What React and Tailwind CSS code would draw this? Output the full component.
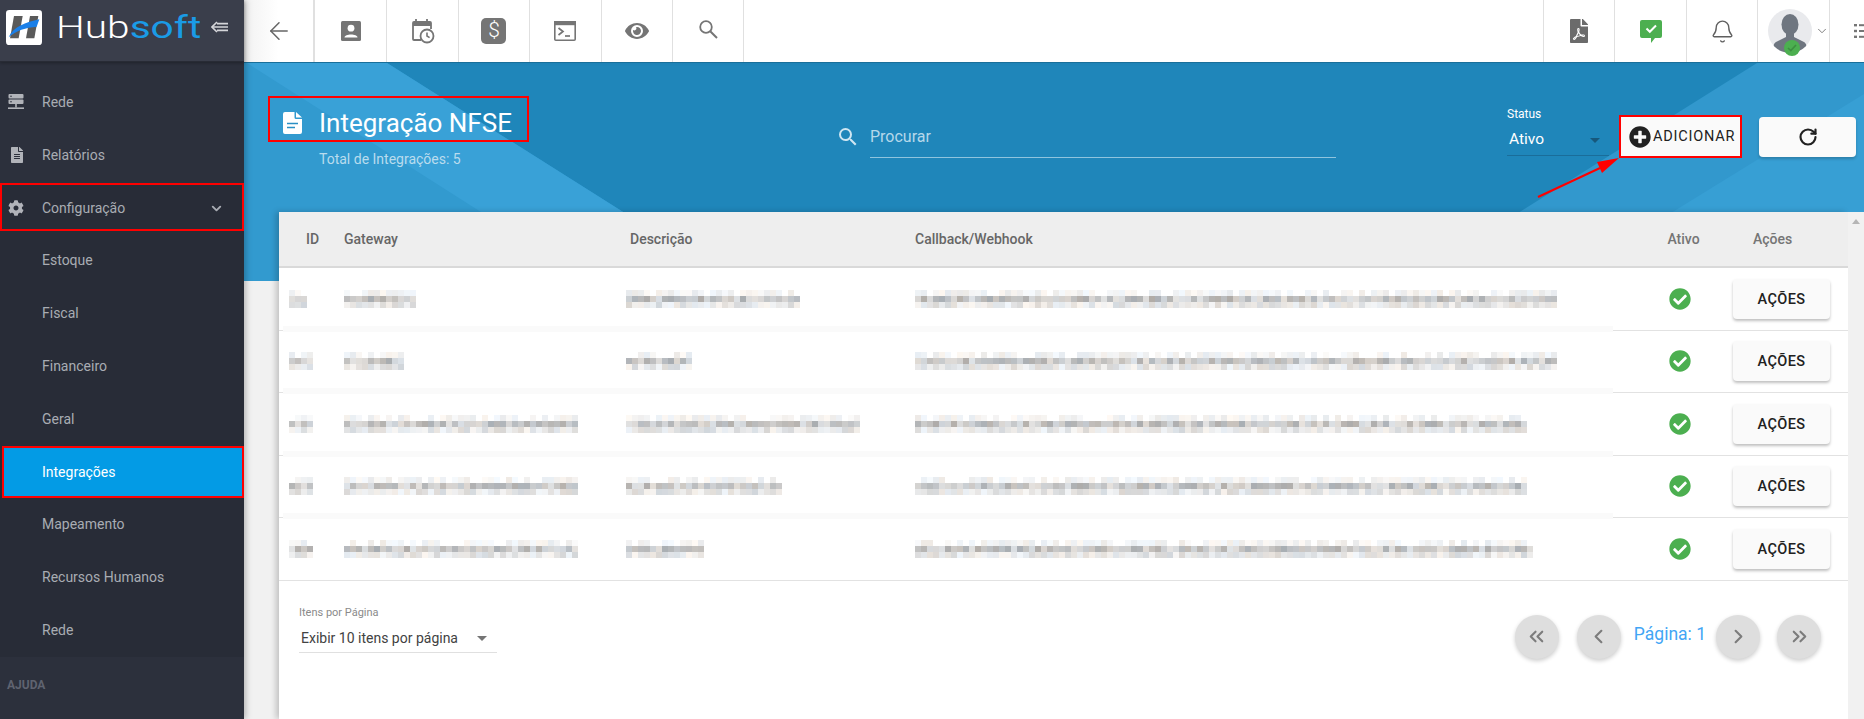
import React from 'react';
import { ArrowLeft, Bell, ChevronDown, RotateCw, ChevronLeft, ChevronRight, ChevronsLeft, ChevronsRight } from 'lucide-react';
import { FaCog, FaFileAlt, FaFilePdf, FaPlusCircle, FaCheckCircle, FaEye } from 'react-icons/fa';
import { MdSearch } from 'react-icons/md';

// Seeded mosaic that stands in for the pixelated data in the screenshot
const Mosaic = ({ width, seed }) => {
  const cols = Math.round(width / 6);
  let s = seed * 9301 + 49297;
  const next = () => {
    s = (s * 9301 + 49297) % 233280;
    return s / 233280;
  };
  const cells = [];
  for (let r = 0; r < 3; r++) {
    for (let c = 0; c < cols; c++) {
      const n = next();
      if (r === 0 && n < 0.25) continue;
      const base = r === 1 ? 172 + n * 55 : r === 0 ? 228 + n * 22 : 214 + n * 32;
      const tint = next() * 12 - 6;
      cells.push(
        <rect key={`${r}-${c}`} x={c * 6} y={r * 6} width="6" height="6"
          fill={`rgb(${base + tint},${base},${base - tint})`} />
      );
    }
  }
  return (
    <svg width={cols * 6} height="18" className="block" shapeRendering="crispEdges">{cells}</svg>
  );
};

const rows = [
  { id: 18, gw: 72, desc: 174, cb: 642 },
  { id: 24, gw: 60, desc: 66, cb: 642 },
  { id: 24, gw: 234, desc: 234, cb: 612 },
  { id: 24, gw: 234, desc: 156, cb: 612 },
  { id: 24, gw: 234, desc: 78, cb: 618 },
];

const subMenu = ['Estoque', 'Fiscal', 'Financeiro', 'Geral', 'Integrações', 'Mapeamento', 'Recursos Humanos', 'Rede'];

const Logo = () => (
  <svg width="36" height="35" viewBox="0 0 108 105" className="shrink-0">
    <rect width="108" height="105" rx="10" fill="#fff" />
    <polygon points="24,18 50,18 38,85 12,85" fill="#5a5a5a" />
    <polygon points="72,18 97,18 85,85 60,85" fill="#5a5a5a" />
    <path d="M8 82 C20 52 60 36 100 28 L92 50 C60 52 30 62 8 82Z" fill="#1a7fe8" />
  </svg>
);

const CollapseIcon = () => (
  <svg width="18" height="12" viewBox="0 0 18 12" fill="none" stroke="#d5d6da" strokeWidth="1.6">
    <path d="M6 1 L1 6 L6 11" />
    <path d="M2 6 H17 M6 2.6 H17 M6 9.4 H17" />
  </svg>
);

const ServerIcon = () => (
  <svg width="16" height="16" viewBox="0 0 16 16">
    <rect x="0.5" width="15" height="4.6" rx="1" fill="#b1b3b9" />
    <rect x="0.5" y="5.4" width="15" height="4.6" rx="1" fill="#b1b3b9" />
    <circle cx="3" cy="2.3" r="0.8" fill="#2c303c" />
    <circle cx="3" cy="7.7" r="0.8" fill="#2c303c" />
    <rect x="7.2" y="10" width="1.6" height="3.5" fill="#b1b3b9" />
    <rect y="13.4" width="16" height="1.6" fill="#b1b3b9" />
  </svg>
);

const DocIcon = () => (
  <svg width="19" height="22" viewBox="0 0 19 22" className="shrink-0">
    <path d="M2 0h9.5v5.5a1.5 1.5 0 0 0 1.5 1.5h6v13a2 2 0 0 1-2 2H2a2 2 0 0 1-2-2V2a2 2 0 0 1 2-2z" fill="#fff" />
    <path d="M13 0l6 5.5h-6z" fill="#fff" />
    <path d="M4 11.5h11M4 15.5h8" stroke="#2a8fc4" strokeWidth="1.5" />
  </svg>
);

const ContactIcon = () => (
  <svg width="20" height="20" viewBox="0 0 20 20">
    <rect width="20" height="20" rx="1.5" fill="#757575" />
    <circle cx="10" cy="7.2" r="3.4" fill="#fff" />
    <path d="M3.5 16.5 C3.5 12.5 16.5 12.5 16.5 16.5Z" fill="#fff" />
  </svg>
);

const CalendarClockIcon = () => (
  <svg width="24" height="26" viewBox="0 0 24 26" fill="none">
    <path d="M5 1v4M16 1v4" stroke="#757575" strokeWidth="1.8" />
    <path d="M10 22H3a1 1 0 0 1-1-1V5a1 1 0 0 1 1-1h16a1 1 0 0 1 1 1v6" stroke="#757575" strokeWidth="1.8" />
    <rect x="2" y="4" width="18" height="4" fill="#757575" />
    <circle cx="16" cy="18" r="6.5" fill="#fff" stroke="#757575" strokeWidth="1.8" />
    <path d="M16 14.5V18l2.6 1.6" stroke="#757575" strokeWidth="1.6" />
  </svg>
);

const TerminalIcon = () => (
  <svg width="22" height="20" viewBox="0 0 22 20" fill="none" stroke="#757575">
    <rect x="0.8" y="0.8" width="20.4" height="18.4" rx="1" strokeWidth="1.6" />
    <rect x="0.8" y="0.8" width="20.4" height="2.6" fill="#757575" strokeWidth="1.6" />
    <path d="M4.5 7 L9 10.5 L4.5 14" strokeWidth="1.7" />
    <path d="M11 15 H16" strokeWidth="1.7" />
  </svg>
);

const SearchIcon = () => (
  <svg width="19" height="19" viewBox="0 0 19 19" fill="none" stroke="#757575" className="-mt-[3px]">
    <circle cx="7" cy="7" r="5.8" strokeWidth="1.8" />
    <path d="M11.2 11.2 L18 18" strokeWidth="2" />
  </svg>
);

const ChatCheckIcon = () => (
  <svg width="22" height="23" viewBox="0 0 22 23">
    <path d="M2 0h18a2 2 0 0 1 2 2v14a2 2 0 0 1-2 2h-5l-4 5v-5H2a2 2 0 0 1-2-2V2a2 2 0 0 1 2-2z" fill="#4caf50" />
    <path d="M6.5 8.5 L9.8 11.8 L16 5.5" fill="none" stroke="#fff" strokeWidth="2" />
  </svg>
);

const ListIcon = () => (
  <svg width="16" height="16" viewBox="0 0 16 16" fill="#757575" className="shrink-0">
    <rect width="3" height="2.4" y="1" />
    <rect width="3" height="2.4" y="6.8" />
    <rect width="3" height="2.4" y="12.6" />
    <rect x="5" width="11" height="2" y="1.2" />
    <rect x="5" width="11" height="2" y="7" />
    <rect x="5" width="11" height="2" y="12.8" />
  </svg>
);

const Avatar = () => (
  <div className="relative w-[44px] h-[44px]">
    <div className="w-full h-full rounded-full overflow-hidden bg-[#e9eaed]">
      <svg width="44" height="44" viewBox="0 0 44 44">
        <ellipse cx="22" cy="15.5" rx="8.5" ry="10.5" fill="#6f7680" />
        <path d="M18 23h8v5l10 5c2 1 3 4 4 11H4c1-7 2-10 4-11l10-5z" fill="#6f7680" />
      </svg>
    </div>
    <div className="absolute left-[16px] top-[31px] w-[16px] h-[16px] rounded-full bg-[#4caf50] flex items-center justify-center">
      <svg width="10" height="8" viewBox="0 0 10 8" fill="none" stroke="#3c8f40" strokeWidth="1.6">
        <path d="M1 4 L3.8 6.6 L9 1" />
      </svg>
    </div>
  </div>
);

const ToolCell = ({ children, className = '' }) => (
  <div className={`w-[71.4px] h-full flex items-center justify-center border-r border-[#e0e0e0] text-[#757575] ${className}`}>
    {children}
  </div>
);

const Sidebar = () => (
  <aside className="w-[244px] shrink-0 h-full flex flex-col bg-[#2c303c] text-[#a9acb3] text-[14px] z-10 shadow-[2px_0_6px_rgba(0,0,0,0.25)]">
    <div className="h-[62px] shrink-0 flex items-center bg-[#3a3e4b] pl-[6px] border-b border-[#282b35] shadow-[0_1px_3px_rgba(0,0,0,0.3)]">
      <div className="-mt-[7px]"><Logo /></div>
      <div className="ml-[14px] w-[146px] -mt-[8px] text-[32px] font-light leading-none whitespace-nowrap origin-left scale-x-[1.27]">
        <span className="text-white">Hub</span><span className="text-[#1a9be6] font-normal">soft</span>
      </div>
      <div className="ml-[9px] -mt-[8px]"><CollapseIcon /></div>
    </div>

    <nav className="pt-[13.5px] flex-1 flex flex-col">
      <div className="h-[53px] shrink-0 flex items-center pl-[8px]">
        <span className="w-[34px]"><ServerIcon /></span>Rede
      </div>
      <div className="h-[53px] shrink-0 flex items-center pl-[9px]">
        <span className="w-[33px]"><FaFileAlt size={16} className="text-[#b1b3b9]" /></span>Relatórios
      </div>
      <div className="h-[48px] mt-[1px] shrink-0 flex items-center pt-[3px] pl-[8px] pr-[20px] bg-[#282c37] outline-2 -outline-offset-2 outline-[#f00]">
        <span className="w-[34px]"><FaCog size={16} className="text-[#b1b3b9]" /></span>Configuração
        <ChevronDown size={15} strokeWidth={3} className="ml-auto" />
      </div>
      <div className="bg-[#282c37] flex flex-col h-[426.5px] shrink-0 pt-[4px]">
        {subMenu.map((item) =>
          item === 'Integrações' ? (
            <div key={item} className="h-[52.8px] shrink-0 flex items-center pl-[40px] ml-[2px] bg-[#039be5] text-white outline-2 -outline-offset-2 outline-[#f00]">
              {item}
            </div>
          ) : (
            <div key={item} className="h-[52.8px] shrink-0 flex items-center pl-[42px]">{item}</div>
          )
        )}
      </div>
      <div className="pl-[7px] pt-[19px] text-[12px] font-bold text-[#5f6370]">AJUDA</div>
    </nav>
  </aside>
);

const Topbar = () => (
  <header className="h-[62px] shrink-0 flex items-stretch bg-white">
    <ToolCell className="w-[70px] border-r-2 bg-gradient-to-r from-[#f2f2f2] via-white to-white">
      <ArrowLeft size={28} strokeWidth={1.3} className="text-[#666666]" />
    </ToolCell>
    <ToolCell className="w-[72px]"><ContactIcon /></ToolCell>
    <ToolCell><CalendarClockIcon /></ToolCell>
    <ToolCell>
      <div className="w-[25px] h-[26px] rounded-[5px] bg-[#757575] text-white text-[21px] font-light flex items-center justify-center">$</div>
    </ToolCell>
    <ToolCell><TerminalIcon /></ToolCell>
    <ToolCell><FaEye size={24} /></ToolCell>
    <ToolCell><SearchIcon /></ToolCell>

    <div className="ml-auto flex items-stretch border-l border-[#e0e0e0]">
      <ToolCell className="w-[71px]"><FaFilePdf size={24} className="text-[#6b6b6b]" /></ToolCell>
      <ToolCell className="w-[72px]"><ChatCheckIcon /></ToolCell>
      <ToolCell className="w-[71px]"><Bell size={25} strokeWidth={1.3} className="text-[#5f5f5f]" /></ToolCell>
      <ToolCell className="w-[72px] justify-start pl-[10px] gap-[3px]">
        <Avatar />
        <ChevronDown size={14} strokeWidth={1.6} />
      </ToolCell>
      <div className="w-[34px] h-full flex items-center pl-[24px] overflow-hidden"><ListIcon /></div>
    </div>
  </header>
);

const Banner = () => (
  <section className="relative h-[219px] shrink-0 overflow-hidden bg-[#1f86ba] border-t border-[#196f9a] shadow-[inset_8px_0_8px_-6px_rgba(0,0,0,0.25)]">
    <svg className="absolute inset-0" width="1620" height="219">
      <polygon points="0,0 143,0 490,219 0,219" fill="#329acf" />
      <polygon points="3,0 143,0 490,219 347,219" fill="#39a1d7" />
      <polygon points="1513,0 1620,0 1620,219 1164,219" fill="#3298cd" />
      <polygon points="1620,31 1620,219 1315,219" fill="#379fd4" />
    </svg>

    <div className="relative flex items-start pl-[24px] text-white">
      <div className="w-[568px] pt-[33px]">
        <div className="w-[261px] h-[46px] flex items-center pl-[15px] pt-[8px] outline-2 -outline-offset-2 outline-[#f00]">
          <DocIcon />
          <h1 className="ml-[17px] text-[26px] leading-none whitespace-nowrap">Integração NFSE</h1>
        </div>
        <p className="mt-[6.5px] ml-[51px] text-[14px] leading-5 text-[#b9dcee]">Total de Integrações: 5</p>
      </div>

      <div className="w-[500px] mt-[55px] flex items-center h-[40px]">
        <span className="w-[34px] shrink-0 pb-[2px]"><MdSearch size={24} className="text-[#cfe6f2]" /></span>
        <div className="flex-1 h-full flex items-center pb-[2px] border-b border-[#8fc4de] text-[16px] text-[#b5d8ea]">Procurar</div>
      </div>

      <div className="ml-[171px] w-[102px] mt-[44px]">
        <div className="text-[12px] leading-[14px]">Status</div>
        <div className="mt-[6px] h-[29px] flex items-center justify-between pl-[2px] pr-[9px] pb-[2px] border-b border-[#1a6d9a] text-[15.5px]">
          Ativo
          <span className="w-0 h-0 border-x-[5px] border-x-transparent border-t-[5px] border-t-[#17587c]" />
        </div>
      </div>

      <button className="ml-[10px] mt-[52px] w-[123px] h-[43px] flex items-center pl-[10px] bg-[#fafafa] text-[#212121] text-[14.5px] tracking-[0.8px] outline-2 -outline-offset-2 outline-[#f00]">
        <FaPlusCircle size={22} className="shrink-0 mr-[2px]" />ADICIONAR
      </button>

      <button className="ml-[17px] mt-[54px] w-[97px] h-[40px] flex items-center justify-center rounded-[4px] bg-[#fafafa] text-[#212121] shadow-[0_2px_3px_rgba(0,0,0,0.2)]">
        <RotateCw size={20} strokeWidth={2.6} />
      </button>
    </div>

    {/* annotation arrow pointing at the add button */}
    <svg className="absolute left-[1290px] top-[91px]" width="90" height="48" fill="none">
      <path d="M4 43 L66 14" stroke="#f00" strokeWidth="2" />
      <polygon points="85,4 63,8 68,19" fill="#f00" />
    </svg>
  </section>
);

const Table = () => (
  <div className="flex-1 bg-white shadow-[-3px_0_6px_rgba(0,0,0,0.2)] flex flex-col">
    <div className="grid grid-cols-[65px_286px_285px_735px_60px_1fr] items-center h-[56px] pt-px bg-[#eeeeee] border-b-2 border-[#d9d9d9] text-[14px] font-medium text-[#666666]">
      <div className="pl-[27px]">ID</div>
      <div>Gateway</div>
      <div>Descrição</div>
      <div>Callback/Webhook</div>
      <div className="text-center pl-[7px] text-[#757575]">Ativo</div>
      <div className="pl-[43px] text-[#757575]">Ações</div>
    </div>

    {rows.map((row, i) => (
      <div key={i} className="relative grid grid-cols-[65px_286px_285px_735px_60px_1fr] items-center h-[62.5px] shrink-0 border-b border-[#e2e2e2]">
        <div className="pl-[10px]"><Mosaic width={row.id} seed={i + 1} /></div>
        <div><Mosaic width={row.gw} seed={i + 11} /></div>
        <div className="-ml-[4px]"><Mosaic width={row.desc} seed={i + 21} /></div>
        <div><Mosaic width={row.cb} seed={i + 31} /></div>
        <div className="flex justify-center"><FaCheckCircle size={22} className="text-[#4caf50]" /></div>
        <div className="pl-[23px]">
          <button className="w-[97px] h-[40px] pt-[2px] rounded-[4px] bg-[#fafafa] text-[14.5px] font-medium tracking-[0.4px] text-[#212121] shadow-[0_2px_3px_rgba(0,0,0,0.25)]">AÇÕES</button>
        </div>
        {i < rows.length - 1 && (
          <div className="absolute left-[4px] -bottom-[2px] w-[1330px] h-[6px] bg-[#fafafa]" />
        )}
      </div>
    ))}

    <div className="flex-1 flex justify-between">
      <div className="pl-[20px] pt-[25px] w-[218px]">
        <div className="text-[11px] leading-[14px] text-[#8a8a8a]">Itens por Página</div>
        <div className="mt-[5px] h-[28px] flex items-center justify-between pl-[2px] pr-[10px] border-b border-[#e0e0e0] text-[14px] text-[#424242]">
          Exibir 10 itens por página
          <span className="w-0 h-0 border-x-[5px] border-x-transparent border-t-[5px] border-t-[#757575]" />
        </div>
      </div>

      <div className="flex items-start pt-[34px] pr-[27px] text-[#7c7c7c]">
        <button className="w-[44px] h-[44px] rounded-full bg-[#dedede] flex items-center justify-center shadow-[0_2px_4px_rgba(0,0,0,0.2)]"><ChevronsLeft size={23} strokeWidth={2.2} /></button>
        <button className="ml-[18px] w-[44px] h-[44px] rounded-full bg-[#dedede] flex items-center justify-center shadow-[0_2px_4px_rgba(0,0,0,0.2)]"><ChevronLeft size={23} strokeWidth={2.2} /></button>
        <span className="ml-[13px] mr-[10px] mt-[7px] text-[17.5px] leading-6 text-[#42a5f5] whitespace-nowrap">Página: 1</span>
        <button className="w-[44px] h-[44px] rounded-full bg-[#dedede] flex items-center justify-center shadow-[0_2px_4px_rgba(0,0,0,0.2)]"><ChevronRight size={23} strokeWidth={2.2} /></button>
        <button className="ml-[17px] w-[44px] h-[44px] rounded-full bg-[#dedede] flex items-center justify-center shadow-[0_2px_4px_rgba(0,0,0,0.2)]"><ChevronsRight size={23} strokeWidth={2.2} /></button>
      </div>
    </div>
  </div>
);

const App = () => (
  <div className="flex h-screen w-full overflow-hidden font-[family-name:Roboto,sans-serif]">
    <Sidebar />
    <main className="flex-1 min-w-0 h-full flex flex-col">
      <Topbar />
      <div className="flex-1 min-h-0 flex flex-col bg-[#f1f1f1] overflow-hidden">
        <Banner />
        <div className="relative -mt-[69px] ml-[35px] flex-1 flex">
          <Table />
          <div className="w-[16px] shrink-0 bg-[#f1f1f1] flex justify-center pt-[7px]">
            <span className="w-0 h-0 border-x-[4px] border-x-transparent border-b-[5px] border-b-[#b5b5b5]" />
          </div>
        </div>
      </div>
    </main>
  </div>
);

export default App;
